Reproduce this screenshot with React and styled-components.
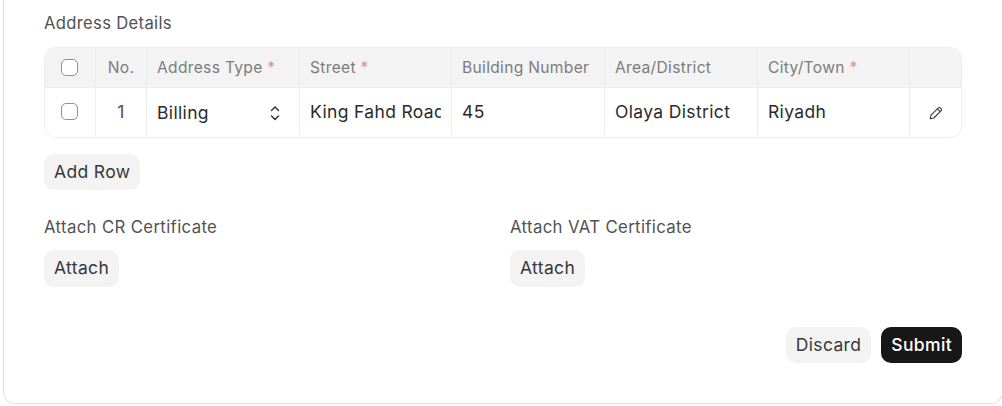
import React from "react";
import styled, { createGlobalStyle } from "styled-components";

const Global = createGlobalStyle`
  html, body { margin: 0; padding: 0; background: #fff; height: 406px; overflow: hidden; }
  body { font-family: Inter, "Liberation Sans", sans-serif; color: #383838; }
  * { box-sizing: border-box; }
`;

const Page = styled.div`
  padding: 0 0 2px 3px;
  height: 406px;
  width: 1010px;
`;
const Card = styled.main`
  height: 404px;
  border: 1px solid #e2e2e2;
  border-top: none;
  border-radius: 0 0 12px 12px;
  padding: 14px 47px 0 40px;
  width: 1000px;
  display: flex;
  flex-direction: column;
`;
const Label = styled.div`
  font-size: 16.6px;
  line-height: 18px;
  letter-spacing: 0.33px;
  color: #525252;
`;
const AttachLabel = styled(Label)`
  font-size: 16.8px;
  letter-spacing: 0.34px;
`;
const Table = styled.div`
  margin-top: 15px;
  width: 918px;
  height: 91px;
  border: 1px solid #ededed;
  border-radius: 12px;
  overflow: hidden;
`;
const Row = styled.div`
  display: grid;
  grid-template-columns: 51px 51px 153px 152px 153px 153px 152px 51px;
  height: ${p => p.$h}px;
  background: ${p => p.$head ? "#f3f3f3" : "#fff"};
  border-bottom: ${p => p.$head ? "1px solid #ededed" : "none"};
`;
const Cell = styled.div`
  display: flex;
  align-items: center;
  justify-content: ${p => p.$center ? "center" : "flex-start"};
  padding: ${p => p.$center ? "0" : "0 10px"};
  border-right: ${p => p.$last ? "none" : "1px solid #ededed"};
  margin-bottom: ${p => p.$head ? "0" : "3px"};
  overflow: hidden;
  min-width: 0;
`;
const HeadText = styled.span`
  font-size: 15.6px;
  letter-spacing: 0.31px;
  color: #7c7c7c;
  white-space: nowrap;
`;
const Star = styled.span`
  color: #e98a8a;
`;
const Value = styled.span`
  font-size: 17.5px;
  letter-spacing: 0.35px;
  color: #2b2b2b;
  white-space: nowrap;
  overflow: hidden;
  display: block;
`;
const Num = styled(Value)`
  color: #525252;
`;
const Check = styled.span`
  width: 17px;
  height: 17px;
  border: 1px solid #8f8f8f;
  border-radius: 5px;
  background: #fff;
  margin-right: 2px;
`;
const SelectWrap = styled.div`
  display: flex;
  flex: 1;
  align-items: center;
  justify-content: space-between;
  margin-top: 2px;
  padding-right: 8px;
`;
const IconSlot = styled.span`
  display: flex;
  margin-top: 3px;
`;
const Btn = styled.button`
  font-family: inherit;
  font-size: 17.5px;
  letter-spacing: 0.35px;
  line-height: 20px;
  height: ${p => p.$h || 36}px;
  padding: 0 10px ${p => p.$h ? "1px" : "0"};
  border: none;
  border-radius: 10px;
  background: ${p => p.$dark ? "#171717" : "#f3f3f3"};
  color: ${p => p.$dark ? "#fff" : "#383838"};
  font-weight: ${p => p.$dark ? 500 : 400};
`;
const AddWrap = styled.div`
  margin-top: 16px;
`;
const Attachments = styled.div`
  margin-top: 28px;
  display: grid;
  grid-template-columns: 466px 1fr;
`;
const AttachCol = styled.div`
  display: flex;
  flex-direction: column;
  align-items: flex-start;
  gap: 14px;
`;
const Footer = styled.div`
  margin-top: 40px;
  display: flex;
  justify-content: flex-end;
  gap: 10px;
  width: 918px;
`;

const Chevrons = () => (
  <svg width="12" height="18" viewBox="0 0 12 18" fill="none" stroke="#2b2b2b" strokeWidth="1.4" strokeLinecap="round" strokeLinejoin="round">
    <path d="M2.5 6.5 6 3 9.5 6.5" />
    <path d="M2.5 12 6 15.5 9.5 12" />
  </svg>
);
const Pencil = () => (
  <svg width="14" height="14" viewBox="0 0 14 14" fill="none" stroke="#383838" strokeWidth="1.1" strokeLinejoin="round">
    <path d="M1.2 12.8 2 9.2 9.4 1.8a1.2 1.2 0 0 1 1.7 0l1.1 1.1a1.2 1.2 0 0 1 0 1.7L4.8 12Z" />
    <path d="M8.4 2.8 11.2 5.6" />
  </svg>
);

const heads = [
  ["Address Type", true],
  ["Street", true],
  ["Building Number", false],
  ["Area/District", false],
  ["City/Town", true],
];

export default function App() {
  return (
    <Page>
      <Global />
      <Card>
        <Label>Address Details</Label>
        <Table>
          <Row $head $h={40}>
            <Cell $center $head><Check /></Cell>
            <Cell $center $head><HeadText>No.</HeadText></Cell>
            {heads.map(([t, req]) => (
              <Cell $head key={t}>
                <HeadText>{t}{req && <Star> *</Star>}</HeadText>
              </Cell>
            ))}
            <Cell $head $last />
          </Row>
          <Row $h={50}>
            <Cell $center><Check /></Cell>
            <Cell $center><Num>1</Num></Cell>
            <Cell>
              <SelectWrap>
                <Value>Billing</Value>
                <Chevrons />
              </SelectWrap>
            </Cell>
            <Cell><Value>King Fahd Road</Value></Cell>
            <Cell><Value>45</Value></Cell>
            <Cell><Value>Olaya District</Value></Cell>
            <Cell><Value>Riyadh</Value></Cell>
            <Cell $center $last><IconSlot><Pencil /></IconSlot></Cell>
          </Row>
        </Table>
        <AddWrap><Btn>Add Row</Btn></AddWrap>
        <Attachments>
          <AttachCol>
            <AttachLabel>Attach CR Certificate</AttachLabel>
            <Btn $h={37}>Attach</Btn>
          </AttachCol>
          <AttachCol>
            <AttachLabel>Attach VAT Certificate</AttachLabel>
            <Btn $h={37}>Attach</Btn>
          </AttachCol>
        </Attachments>
        <Footer>
          <Btn>Discard</Btn>
          <Btn $dark>Submit</Btn>
        </Footer>
      </Card>
    </Page>
  );
}
